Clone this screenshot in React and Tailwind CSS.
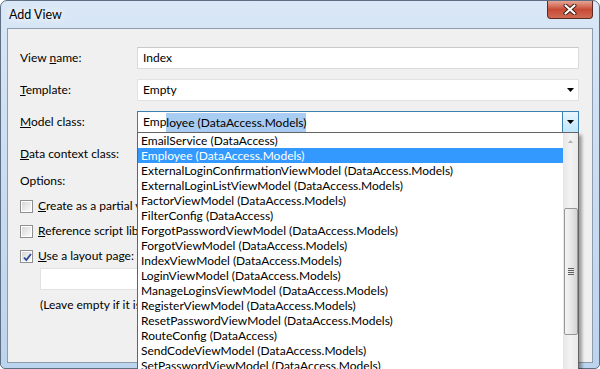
import React from "react";

const items = [
  "EmailService (DataAccess)",
  "Employee (DataAccess.Models)",
  "ExternalLoginConfirmationViewModel (DataAccess.Models)",
  "ExternalLoginListViewModel (DataAccess.Models)",
  "FactorViewModel (DataAccess.Models)",
  "FilterConfig (DataAccess)",
  "ForgotPasswordViewModel (DataAccess.Models)",
  "ForgotViewModel (DataAccess.Models)",
  "IndexViewModel (DataAccess.Models)",
  "LoginViewModel (DataAccess.Models)",
  "ManageLoginsViewModel (DataAccess.Models)",
  "RegisterViewModel (DataAccess.Models)",
  "ResetPasswordViewModel (DataAccess.Models)",
  "RouteConfig (DataAccess)",
  "SendCodeViewModel (DataAccess.Models)",
  "SetPasswordViewModel (DataAccess.Models)",
  "UserViewModel (DataAccess.Models)",
];

function Arrow() {
  return (
    <svg width="7" height="4" viewBox="0 0 7 4">
      <path d="M0 0H7L3.5 4Z" fill="#000" />
    </svg>
  );
}

function Checkbox({ checked }) {
  return (
    <div className="w-[13px] h-[13px] border border-[#8e8f8f] bg-white p-px shrink-0">
      <div className="w-full h-full bg-gradient-to-br from-[#d8d8d8] to-[#fbfbfb] relative">
        {checked && (
          <svg width="11" height="11" viewBox="0 0 11 11" className="absolute left-0 top-0">
            <path d="M2 5.5L4.3 8L9 2" fill="none" stroke="#2a4a9a" strokeWidth="1.8" />
          </svg>
        )}
      </div>
    </div>
  );
}

function Label({ pre, u, post }) {
  return (
    <span className="w-[117px] shrink-0">
      {pre}
      <u>{u}</u>
      {post}
    </span>
  );
}

export default function App() {
  return (
    <div className="w-[600px] h-[369px] bg-white overflow-hidden font-['Lato','Open_Sans',sans-serif] text-[12px] text-black leading-[16px]">
      <div className="w-[600px] h-[369px] rounded-t-[7px] rounded-b-[5px] border border-[#5d6e82] bg-gradient-to-b from-[#d9e7f6] via-[#c9dcf1] to-[#bdd4ee] flex flex-col">
        {/* Title bar */}
        <div className="h-[27px] flex justify-between pl-[8px] pr-[6px] shrink-0">
          <div className="pt-[6px] text-[12.5px] [text-shadow:0_0_6px_#ffffff,0_0_10px_#ffffff]">Add View</div>
          <div className="w-[46px] h-[18px] rounded-b-[4px] border border-t-0 border-[#5b2b24] bg-gradient-to-b from-[#e5a596] via-[#c74a35] to-[#cf6b55] flex items-center justify-center">
            <svg width="14" height="11" viewBox="0 0 14 11">
              <path d="M2.5 1.5L11.5 9.5M11.5 1.5L2.5 9.5" stroke="#3a1a14" strokeWidth="4" strokeLinecap="round" />
              <path d="M2.5 1.5L11.5 9.5M11.5 1.5L2.5 9.5" stroke="#ffffff" strokeWidth="2.2" strokeLinecap="round" />
            </svg>
          </div>
        </div>
        {/* Client area */}
        <div className="flex-1 mx-[6px] mb-[5px] border border-[#8d9cae] bg-[#f0f0f0] pl-[12px] pt-[18px] flex flex-col">
          <div className="flex items-center h-[22px]">
            <Label pre="View " u="n" post="ame:" />
            <div className="w-[442px] h-[22px] bg-white border border-[#dadada] border-t-[#c9c9c9] pl-[5px] flex items-center">Index</div>
          </div>
          <div className="flex items-center h-[22px] mt-[10px]">
            <Label pre="" u="T" post="emplate:" />
            <div className="w-[442px] h-[22px] bg-white border border-[#e2e2e2] pl-[5px] pr-[4px] flex items-center justify-between">
              <span>Empty</span>
              <Arrow />
            </div>
          </div>
          <div className="flex items-center h-[22px] mt-[10px]">
            <Label pre="" u="M" post="odel class:" />
            <div className="relative w-[442px] h-[22px]">
              <div className="w-full h-full bg-white border border-[#3c7fb1] pl-[5px] flex items-center">
                <span>Emp</span>
                <span className="bg-[#a9cdf2] leading-[19px]">loyee (DataAccess.Models)</span>
                <div className="ml-auto w-[16px] h-full border-l border-[#3c7fb1] bg-gradient-to-b from-[#eaf6fd] to-[#bee6fd] flex items-center justify-center">
                  <Arrow />
                </div>
              </div>
              {/* Dropdown list */}
              <div className="absolute left-0 top-[21px] w-[442px] h-[250px] border border-[#646464] bg-white flex shadow-[3px_3px_3px_rgba(0,0,0,0.35)] z-10">
                <div className="flex-1 flex flex-col">
                  {items.map((it, i) => (
                    <div
                      key={it}
                      className={
                        "h-[15px] shrink-0 leading-[15px] pl-[3px] whitespace-nowrap " +
                        (i === 1 ? "bg-[#3399ff] text-white" : "")
                      }
                    >
                      {it}
                    </div>
                  ))}
                </div>
                <div className="w-[15px] bg-gradient-to-r from-[#e6e6e6] via-[#f3f3f3] to-[#e9e9e9] flex flex-col items-center shrink-0">
                  <div className="h-[17px] flex items-center justify-center">
                    <svg width="5" height="3" viewBox="0 0 5 3">
                      <path d="M0 3H5L2.5 0Z" fill="#b0b0b0" />
                    </svg>
                  </div>
                  <div className="mt-[58px] w-[14px] h-[127px] rounded-[2px] border border-[#979797] bg-gradient-to-r from-[#f4f4f4] via-[#e8e8e8] to-[#d4d4d4] flex items-center justify-center">
                    <div className="flex flex-col gap-[1px]">
                      <div className="w-[6px] h-px bg-[#606060]" />
                      <div className="w-[6px] h-px bg-[#606060]" />
                      <div className="w-[6px] h-px bg-[#606060]" />
                      <div className="w-[6px] h-px bg-[#606060]" />
                    </div>
                  </div>
                </div>
              </div>
            </div>
          </div>
          <div className="flex items-center h-[22px] mt-[10px]">
            <Label pre="" u="D" post="ata context class:" />
            <div className="w-[442px] h-[22px] bg-white border border-[#e2e2e2]" />
          </div>
          <div className="mt-[8px] h-[16px]">Options:</div>
          <div className="mt-[9px] h-[16px] flex items-center gap-[5px]">
            <Checkbox />
            <span>
              <u>C</u>reate as a partial view
            </span>
          </div>
          <div className="mt-[9px] h-[16px] flex items-center gap-[5px]">
            <Checkbox />
            <span>
              <u>R</u>eference script libraries
            </span>
          </div>
          <div className="mt-[9px] h-[16px] flex items-center gap-[5px]">
            <Checkbox checked />
            <span>
              <u>U</u>se a layout page:
            </span>
          </div>
          <div className="mt-[4px] ml-[20px] w-[420px] h-[22px] bg-white border border-[#e2e2e2]" />
          <div className="mt-[7px] ml-[20px] h-[16px]">(Leave empty if it is set in a Razor _viewstart file)</div>
        </div>
      </div>
    </div>
  );
}
